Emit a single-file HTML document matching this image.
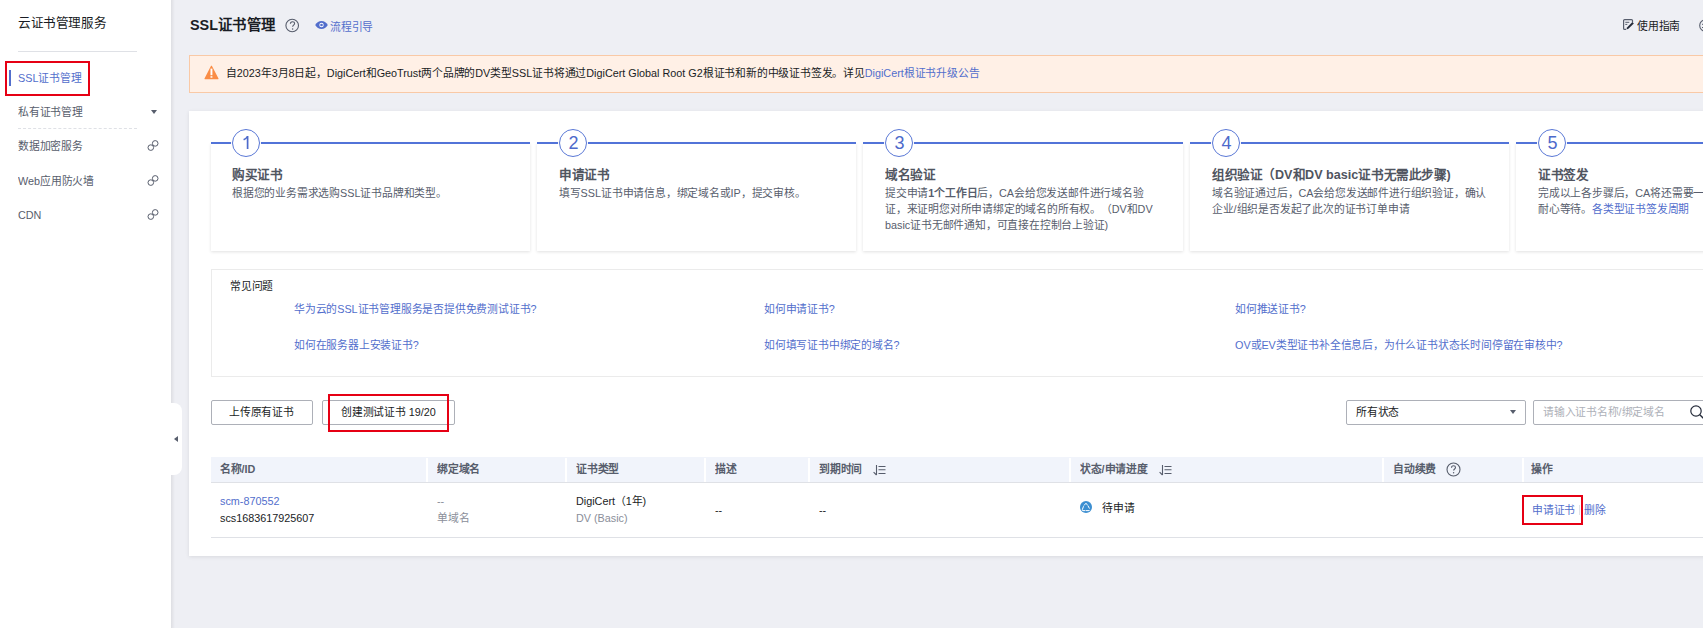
<!DOCTYPE html>
<html lang="zh-CN"><head><meta charset="utf-8">
<style>
*{margin:0;padding:0;box-sizing:border-box}
html,body{width:1703px;height:628px;overflow:hidden;background:#eeeff4;font-family:"Liberation Sans",sans-serif;color:#252b3a;font-size:12px;text-spacing-trim:space-all}
.a{position:absolute;white-space:nowrap}
.t{position:absolute;white-space:nowrap;transform:scale(.9);transform-origin:0 0;font-size:12px;line-height:18px}
svg{position:absolute;overflow:visible}
#side{position:absolute;left:0;top:0;width:171px;height:628px;background:#fff}
#shadow{position:absolute;left:171px;top:0;width:4px;height:628px;background:linear-gradient(to right,rgba(0,0,0,.07),rgba(0,0,0,0))}
.blue{color:#526ecc}
.sd{color:#575d6c}
.dk{color:#191c24}
.card{position:absolute;left:189px;top:111px;width:1520px;height:445px;background:#fff;box-shadow:0 1px 4px rgba(0,0,0,.09)}
.step{position:absolute;top:143px;height:108px;width:319px;background:#fff;box-shadow:0 1px 3px rgba(0,0,0,.12)}
.step .ln{position:absolute;left:0;right:0;top:-1px;height:2px;background:#5273d8}
.step .c{position:absolute;left:21px;top:-14px;width:28px;height:28px;border:1px solid #5a78d6;border-radius:50%;background:#fff;box-shadow:0 0 0 1px #fff}
.step .n{position:absolute;left:0;top:4px;width:27px;text-align:center;font-size:20px;line-height:20px;color:#4d6acb;transform:scale(.9);transform-origin:50% 0}
.step .h{position:absolute;left:21px;top:22px;font-size:14px;font-weight:bold;color:#50555f;line-height:20px;white-space:nowrap;transform:scale(.9);transform-origin:0 0}
.step .d{position:absolute;left:21px;top:43px;font-size:12px;color:#575d6c;line-height:17.78px;white-space:nowrap;transform:scale(.9);transform-origin:0 0}
.s2 .c,.s3 .c{left:22px}.s2 .h,.s2 .d{left:21.5px}.s3 .h,.s3 .d{left:22px}
.faq{position:absolute;left:211px;top:269px;width:1500px;height:108px;border:1px solid #ebebeb;border-right:none}
.btn{position:absolute;top:400px;height:25px;border:1px solid #adb0b8;border-radius:2px;background:#fff}
.red{position:absolute;border:2px solid #e60014}
.th{position:absolute;top:457px;height:26px;left:211px;width:1500px;background:#f1f4fb;border-bottom:1px solid #dfe1e6}
.th i{position:absolute;top:1px;width:2px;height:24px;background:#fff}
.hd{font-weight:bold;color:#575d6c}
</style></head><body>
<div id="side">
  <div class="t dk" style="left:18px;top:13px;font-size:14px;line-height:20px">云证书管理服务</div>
  <div class="a" style="left:18px;top:51px;width:119px;height:1px;background:#dfe1e6"></div>
  <div class="a" style="left:9px;top:70px;width:2px;height:16px;background:#526ecc"></div>
  <div class="t blue" style="left:18px;top:70px">SSL证书管理</div>
  <div class="red" style="left:5px;top:61px;width:85px;height:35px"></div>
  <div class="t sd" style="left:18px;top:104px">私有证书管理</div>
  <div class="a" style="left:151px;top:110px;width:0;height:0;border-left:3.5px solid transparent;border-right:3.5px solid transparent;border-top:4px solid #575d6c"></div>
  <div class="a" style="left:18px;top:128px;width:119px;height:0;border-top:1px dashed #dfe1e6"></div>
  <div class="t sd" style="left:18px;top:138px">数据加密服务</div>
  <div class="t sd" style="left:18px;top:173px">Web应用防火墙</div>
  <div class="t sd" style="left:18px;top:207px">CDN</div>
  <svg style="left:147px;top:139px" width="12" height="13" viewBox="0 0 12 13"><g fill="none" stroke="#575d6c" stroke-width="1"><circle cx="3.8" cy="8.6" r="2.8"/><circle cx="8.2" cy="4.4" r="2.8"/></g></svg>
  <svg style="left:147px;top:174px" width="12" height="13" viewBox="0 0 12 13"><g fill="none" stroke="#575d6c" stroke-width="1"><circle cx="3.8" cy="8.6" r="2.8"/><circle cx="8.2" cy="4.4" r="2.8"/></g></svg>
  <svg style="left:147px;top:208px" width="12" height="13" viewBox="0 0 12 13"><g fill="none" stroke="#575d6c" stroke-width="1"><circle cx="3.8" cy="8.6" r="2.8"/><circle cx="8.2" cy="4.4" r="2.8"/></g></svg>
</div>
<div id="shadow"></div>
<div class="a" style="left:171px;top:403px;width:11px;height:72px;background:#fff;border-radius:0 8px 8px 0"></div>
<div class="a" style="left:174px;top:436px;width:0;height:0;border-top:3.5px solid transparent;border-bottom:3.5px solid transparent;border-right:4px solid #575d6c"></div>

<div class="t dk" style="left:190px;top:16px;font-size:16px;font-weight:bold;line-height:20px">SSL证书管理</div>
<svg style="left:285px;top:18px" width="15" height="15" viewBox="0 0 15 15"><circle cx="7.2" cy="7.5" r="6.3" fill="none" stroke="#575d6c" stroke-width="1.1"/><path d="M5.4 5.8c0-1.3 1-2.1 2.1-2.1s2.1.8 2.1 1.9c0 1.4-2 1.6-2 3.1" fill="none" stroke="#575d6c" stroke-width="1.1"/><circle cx="7.6" cy="10.9" r=".75" fill="#575d6c"/></svg>
<svg style="left:315px;top:21px" width="13" height="8" viewBox="0 0 13 8"><path d="M0.2 4C1.8 1.4 3.9 0.1 6.5 0.1s4.7 1.3 6.3 3.9C11.2 6.6 9.1 7.9 6.5 7.9S1.8 6.6 0.2 4z" fill="#526ecc"/><circle cx="6.5" cy="4" r="2.2" fill="#fff"/><circle cx="6.5" cy="4" r="1.3" fill="#526ecc"/></svg>
<div class="t blue" style="left:330px;top:18.5px">流程引导</div>
<svg style="left:1623px;top:19px" width="11" height="11" viewBox="0 0 11 11"><path d="M9.5 3.2V1.6c0-.6-.4-1-1-1H1.6c-.6 0-1 .4-1 1v7.8c0 .6.4 1 1 1h1.4" fill="none" stroke="#575d6c" stroke-width="1.2"/><path d="M2.3 3.3h4M2.3 5.4h2" stroke="#575d6c" stroke-width="1"/><path d="M10.8 4.4L5.4 9.8 3.4 10.4 4 8.4 9.4 3z" fill="#252b3a"/></svg>
<div class="t dk" style="left:1637px;top:17.5px">使用指南</div>
<svg style="left:1699px;top:19px" width="13" height="13" viewBox="0 0 13 13"><circle cx="6.5" cy="6.5" r="5.8" fill="none" stroke="#575d6c" stroke-width="1.1"/><path d="M3 5.3h5M3 8.5h5" stroke="#575d6c" stroke-width="1"/></svg>

<div class="a" style="left:189px;top:55px;width:1520px;height:38px;background:#fff0e6;border:1px solid #f9c9a6"></div>
<svg style="left:204px;top:65px" width="15" height="15" viewBox="0 0 15 15"><path d="M7.4 0.8c.3 0 .5.1.7.4l6.4 12.4c.2.4 0 .7-.4.7H0.9c-.4 0-.6-.3-.4-.7L6.8 1.2c.1-.3.3-.4.6-.4z" fill="#fa8c45"/><rect x="6.5" y="3.6" width="1.9" height="6.6" fill="#fff"/><rect x="6.5" y="11.2" width="1.9" height="1.5" fill="#fff"/></svg>
<div class="t dk" style="left:226px;top:65px">自2023年3月8日起，DigiCert和GeoTrust两个品牌的DV类型SSL证书将通过DigiCert Global Root G2根证书和新的中级证书签发。详见<span class="blue">DigiCert根证书升级公告</span></div>

<div class="card"></div>
<div class="step" style="left:211px"><div class="ln"></div><div class="c"><svg style="left:0;top:0" width="27" height="27" viewBox="0 0 27 27"><path d="M14.6 6V19" stroke="#4d6acb" stroke-width="1.7" fill="none"/><path d="M14.4 6.6C13.4 8.2 12 9.2 10.6 9.8" stroke="#4d6acb" stroke-width="1.5" fill="none"/></svg></div><div class="h">购买证书</div><div class="d">根据您的业务需求选购SSL证书品牌和类型。</div></div>
<div class="step s2" style="left:537px"><div class="ln"></div><div class="c"><div class="n">2</div></div><div class="h">申请证书</div><div class="d">填写SSL证书申请信息，绑定域名或IP，提交审核。</div></div>
<div class="step s3" style="left:863px;width:320px"><div class="ln"></div><div class="c"><div class="n">3</div></div><div class="h">域名验证</div><div class="d">提交申请<b>1个工作日</b>后，CA会给您发送邮件进行域名验<br>证，来证明您对所申请绑定的域名的所有权。（DV和DV<br>basic证书无邮件通知，可直接在控制台上验证)</div></div>
<div class="step s3" style="left:1190px"><div class="ln"></div><div class="c"><div class="n">4</div></div><div class="h">组织验证（DV和DV basic证书无需此步骤)</div><div class="d">域名验证通过后，CA会给您发送邮件进行组织验证，确认<br>企业/组织是否发起了此次的证书订单申请</div></div>
<div class="step s3" style="left:1516px;width:400px"><div class="ln"></div><div class="c"><div class="n">5</div></div><div class="h">证书签发</div><div class="d">完成以上各步骤后，CA将还需要一定时间签发证书，请您<br>耐心等待。<span class="blue">各类型证书签发周期</span></div></div>

<div class="faq"></div>
<div class="t dk" style="left:230px;top:278px">常见问题</div>
<div class="t blue" style="left:294px;top:301px">华为云的SSL证书管理服务是否提供免费测试证书?</div>
<div class="t blue" style="left:764px;top:301px">如何申请证书?</div>
<div class="t blue" style="left:1235px;top:301px">如何推送证书?</div>
<div class="t blue" style="left:294px;top:337px">如何在服务器上安装证书?</div>
<div class="t blue" style="left:764px;top:337px">如何填写证书中绑定的域名?</div>
<div class="t blue" style="left:1235px;top:337px">OV或EV类型证书补全信息后，为什么证书状态长时间停留在审核中?</div>

<div class="btn" style="left:211px;width:102px"></div>
<div class="t dk" style="left:229px;top:404px">上传原有证书</div>
<div class="btn" style="left:322px;width:133px"></div>
<div class="t dk" style="left:341px;top:404px">创建测试证书 19/20</div>
<div class="red" style="left:328px;top:394px;width:121px;height:38px"></div>

<div class="a" style="left:1346px;top:400px;width:180px;height:25px;border:1px solid #adb0b8;border-radius:2px;background:#fff"></div>
<div class="t dk" style="left:1356px;top:404px">所有状态</div>
<div class="a" style="left:1510px;top:410px;width:0;height:0;border-left:3.5px solid transparent;border-right:3.5px solid transparent;border-top:4px solid #575d6c"></div>
<div class="a" style="left:1533px;top:400px;width:200px;height:25px;border:1px solid #adb0b8;border-radius:2px;background:#fff"></div>
<div class="t" style="left:1543px;top:404px;color:#adb0b8">请输入证书名称/绑定域名</div>
<svg style="left:1690px;top:405px" width="14" height="14" viewBox="0 0 14 14"><circle cx="6" cy="6" r="5.2" fill="none" stroke="#252b3a" stroke-width="1.2"/><path d="M9.8 9.8l3.5 3.5" stroke="#252b3a" stroke-width="1.4"/></svg>

<div class="th">
  <i style="left:215px"></i><i style="left:354px"></i><i style="left:493px"></i><i style="left:597px"></i><i style="left:858px"></i><i style="left:1171px"></i><i style="left:1311px"></i>
</div>
<div class="t hd" style="left:220px;top:461px">名称/ID</div>
<div class="t hd" style="left:437px;top:461px">绑定域名</div>
<div class="t hd" style="left:576px;top:461px">证书类型</div>
<div class="t hd" style="left:715px;top:461px">描述</div>
<div class="t hd" style="left:819px;top:461px">到期时间</div>
<div class="t hd" style="left:1080px;top:461px">状态/申请进度</div>
<div class="t hd" style="left:1393px;top:461px">自动续费</div>
<div class="t hd" style="left:1531px;top:461px">操作</div>
<svg style="left:872px;top:465px" width="15" height="11" viewBox="0 0 15 11"><path d="M4.5 0v10M4.5 10L1.6 7.2" fill="none" stroke="#575d6c" stroke-width="1.1"/><path d="M6.5 1.5h7M6.5 4.8h7M6.5 8.5h7" stroke="#575d6c" stroke-width="1.1"/></svg>
<svg style="left:1158px;top:465px" width="15" height="11" viewBox="0 0 15 11"><path d="M4.5 0v10M4.5 10L1.6 7.2" fill="none" stroke="#575d6c" stroke-width="1.1"/><path d="M6.5 1.5h7M6.5 4.8h7M6.5 8.5h7" stroke="#575d6c" stroke-width="1.1"/></svg>
<svg style="left:1446px;top:462px" width="15" height="15" viewBox="0 0 15 15"><circle cx="7.5" cy="7.5" r="6.5" fill="none" stroke="#575d6c" stroke-width="1.1"/><path d="M5.5 5.8c0-1.2.9-2 2-2s2 .8 2 1.8c0 1.3-1.9 1.5-1.9 3" fill="none" stroke="#575d6c" stroke-width="1.1"/><circle cx="7.6" cy="10.8" r=".7" fill="#575d6c"/></svg>

<div class="t blue" style="left:220px;top:493px">scm-870552</div>
<div class="t dk" style="left:220px;top:510px">scs1683617925607</div>
<div class="t" style="left:437px;top:493px;color:#8a8e99">--</div>
<div class="t" style="left:437px;top:510px;color:#8a8e99">单域名</div>
<div class="t dk" style="left:576px;top:493px">DigiCert（1年)</div>
<div class="t" style="left:576px;top:510px;color:#8a8e99">DV (Basic)</div>
<div class="t dk" style="left:715px;top:502px">--</div>
<div class="t dk" style="left:819px;top:502px">--</div>
<div class="t dk" style="left:1102px;top:500px">待申请</div>
<div class="t blue" style="left:1532px;top:502px">申请证书</div>
<div class="a" style="left:1579px;top:505px;width:1px;height:10px;background:#dfe1e6"></div>
<div class="t blue" style="left:1584px;top:502px">删除</div>
<svg style="left:1080px;top:501px" width="12" height="12" viewBox="0 0 12 12"><circle cx="6" cy="6" r="6" fill="#3d8fd1"/><path d="M4.3 4.2L6 2.2 7.2 3.8M8 4.8L9.3 7.2M3.4 5.6L2.4 8.4M2.6 9.6H5M6.2 9.6H9.2" fill="none" stroke="#fff" stroke-width="1" stroke-linecap="round"/></svg>
<div class="a" style="left:211px;top:537px;width:1500px;height:1px;background:#dfe1e6"></div>
<div class="red" style="left:1522px;top:495px;width:61px;height:30px"></div>
</body></html>
